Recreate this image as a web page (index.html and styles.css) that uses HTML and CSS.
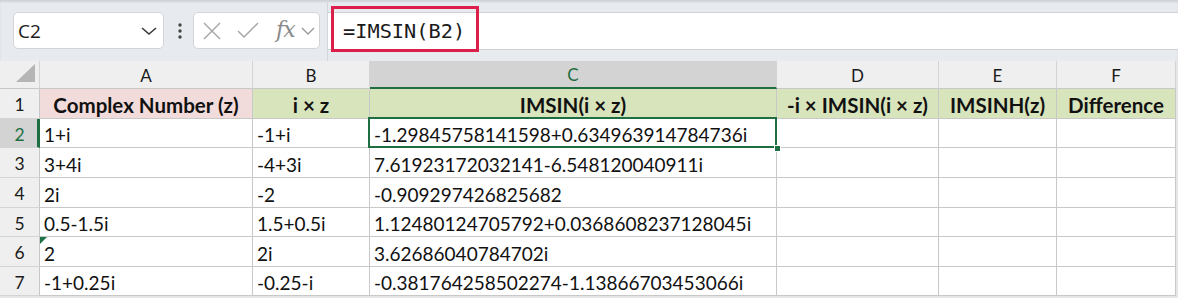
FILE: index.html
```html
<!DOCTYPE html>
<html>
<head>
<meta charset="utf-8">
<link rel="stylesheet" href="styles.css">
</head>
<body>
<div class="toolbar">
  <div class="namebox">
    <span class="name">C2</span>
    <svg class="chev" width="16" height="10" viewBox="0 0 16 10"><polyline points="1,2 8,8 15,2" fill="none" stroke="#3a3a3a" stroke-width="1.6"/></svg>
  </div>
  <svg class="dots" width="6" height="18" viewBox="0 0 6 18"><circle cx="3" cy="3" r="1.7" fill="#444"/><circle cx="3" cy="9" r="1.7" fill="#444"/><circle cx="3" cy="15" r="1.7" fill="#444"/></svg>
  <div class="fnbox">
    <svg class="ico-x" width="20" height="18" viewBox="0 0 20 18"><path d="M2 1 L18 17 M18 1 L2 17" stroke="#a8a8a8" stroke-width="1.5" fill="none"/></svg>
    <svg class="ico-ok" width="22" height="18" viewBox="0 0 22 18"><polyline points="1,9 7,15 21,1" fill="none" stroke="#a8a8a8" stroke-width="1.5"/></svg>
    <span class="fx">fx</span>
    <svg class="chev-s" width="14" height="8" viewBox="0 0 14 8"><polyline points="1,1 7,7 13,1" fill="none" stroke="#9a9a9a" stroke-width="1.4"/></svg>
  </div>
  <div class="formula">
    <div class="input">
      <span class="ftext">=IMSIN(B2)</span>
      <div class="highlight"></div>
    </div>
  </div>
</div>
<div class="sheet">
  <div class="corner"><span class="tri"></span></div>
  <div class="ch">A</div>
  <div class="ch">B</div>
  <div class="ch sel">C</div>
  <div class="ch">D</div>
  <div class="ch">E</div>
  <div class="ch">F</div>

  <div class="rh">1</div>
  <div class="c hd pink">Complex Number (z)</div>
  <div class="c hd green">i × z</div>
  <div class="c hd green">IMSIN(i × z)</div>
  <div class="c hd green">-i × IMSIN(i × z)</div>
  <div class="c hd green">IMSINH(z)</div>
  <div class="c hd green">Difference</div>

  <div class="rh sel">2</div>
  <div class="c">1+i</div>
  <div class="c">-1+i</div>
  <div class="c active">-1.29845758141598+0.634963914784736i<span class="handle"></span></div>
  <div class="c"></div>
  <div class="c"></div>
  <div class="c"></div>

  <div class="rh">3</div>
  <div class="c">3+4i</div>
  <div class="c">-4+3i</div>
  <div class="c">7.61923172032141-6.548120040911i</div>
  <div class="c"></div>
  <div class="c"></div>
  <div class="c"></div>

  <div class="rh">4</div>
  <div class="c">2i</div>
  <div class="c">-2</div>
  <div class="c">-0.909297426825682</div>
  <div class="c"></div>
  <div class="c"></div>
  <div class="c"></div>

  <div class="rh">5</div>
  <div class="c">0.5-1.5i</div>
  <div class="c">1.5+0.5i</div>
  <div class="c">1.12480124705792+0.0368608237128045i</div>
  <div class="c"></div>
  <div class="c"></div>
  <div class="c"></div>

  <div class="rh">6</div>
  <div class="c err">2</div>
  <div class="c">2i</div>
  <div class="c">3.62686040784702i</div>
  <div class="c"></div>
  <div class="c"></div>
  <div class="c"></div>

  <div class="rh">7</div>
  <div class="c">-1+0.25i</div>
  <div class="c">-0.25-i</div>
  <div class="c">-0.381764258502274-1.13866703453066i</div>
  <div class="c"></div>
  <div class="c"></div>
  <div class="c"></div>
</div>
</body>
</html>
```

FILE: styles.css
```css
* { box-sizing: border-box; }
html, body { margin: 0; padding: 0; background: #fff; }
body { width: 1178px; height: 298px; overflow: hidden; font-family: Lato, "Liberation Sans", sans-serif; }

.toolbar {
  height: 61px;
  background: #e7eaee;
  box-shadow: inset 0 2px 2px rgba(0,0,0,0.10);
  display: flex;
  align-items: flex-start;
  padding-top: 12px;
}
.namebox {
  margin-left: 13px;
  width: 151px;
  height: 37px;
  background: #fff;
  border: 1px solid #d2d4d6;
  border-radius: 5px;
  display: flex;
  align-items: center;
  justify-content: space-between;
  padding: 0 6px 0 4px;
}
.name { font-family: "Open Sans", "Noto Sans", sans-serif; font-size: 19px; color: #1a1a1a; margin-top: 1px; }
.chev { margin-top: 1px; }
.dots { margin: 10px 0 0 13px; }
.fnbox {
  margin-left: 10px;
  width: 127px;
  height: 37px;
  background: #fff;
  border: 1px solid #d2d4d6;
  border-radius: 5px;
  display: flex;
  align-items: center;
  padding-left: 8px;
}
.ico-x { margin-right: 15px; }
.ico-ok { margin-right: 17px; }
.fx {
  font-family: "DejaVu Serif", "Liberation Serif", serif;
  font-style: italic;
  font-size: 22px;
  color: #8a8a8a;
  letter-spacing: -1px;
  margin-right: 6px;
  margin-top: -3px;
}
.formula {
  flex: 1;
  align-self: stretch;
  margin-top: -12px;
  margin-left: 7px;
  border-left: 1px solid #d3d7db;
  display: flex;
  align-items: flex-start;
  padding-top: 12px;
}
.input {
  position: relative;
  flex: 1;
  height: 38px;
  background: #fff;
  border-top: 1px solid #cfd1d3;
  border-bottom: 1px solid #cfd1d3;
  padding-left: 15px;
  display: flex;
  align-items: center;
}
.ftext { font-family: "DejaVu Sans Mono", "Liberation Mono", monospace; font-size: 20.3px; color: #1a1a1a; }
.highlight {
  position: absolute;
  left: 3px;
  top: -7px;
  width: 148px;
  height: 46px;
  border: 3px solid #dc1e4a;
}

.sheet {
  display: grid;
  grid-template-columns: 40px 213px 117px 407px 162px 118px 119px;
  grid-template-rows: 28px 30px 29px 30px 30px 29px 30px 29px;
  background: #e6e6e6;
  height: 237px;
}
.corner {
  background: #efefef;
  border-right: 1px solid #d4d4d4;
  border-bottom: 1px solid #c8c8c8;
  position: relative;
}
.tri {
  position: absolute;
  right: 4px;
  bottom: 6px;
  width: 0; height: 0;
  border-left: 19px solid transparent;
  border-bottom: 18px solid #b5b5b5;
}
.ch {
  background: #efefef;
  border-right: 1px solid #d4d4d4;
  border-bottom: 1px solid #c8c8c8;
  font-size: 17px;
  color: #1a1a1a;
  display: flex;
  align-items: center;
  justify-content: center;
  padding-top: 1px;
}
.ch.sel { background: #d3d3d3; color: #1e6e42; border-bottom: 2px solid #1e6e42; }
.rh {
  background: #efefef;
  border-right: 1px solid #c8c8c8;
  border-bottom: 1px solid #d4d4d4;
  font-size: 17.5px;
  color: #1a1a1a;
  display: flex;
  align-items: center;
  justify-content: center;
  padding-top: 2px;
}
.rh.sel { background: #d3d3d3; color: #1e6e42; border-right: 3px solid #1e6e42; padding-left: 2px; }
.c {
  background: #fff;
  border-right: 1px solid #c8c8c8;
  border-bottom: 1px solid #c8c8c8;
  font-size: 19px;
  line-height: 22px;
  color: #111;
  display: flex;
  align-items: flex-end;
  padding: 0 0 1px 4px;
  white-space: nowrap;
  position: relative;
}
.c.hd { font-weight: 700; font-size: 20.5px; justify-content: center; padding-left: 0; padding-bottom: 2px; }
.c.pink { background: #f2dcdb; }
.c.green { background: #d8e4bc; }
.c.active::after {
  content: "";
  position: absolute;
  left: -2px; top: -2px; right: -1px; bottom: -1px;
  border: 2px solid #1e6e42;
}
.handle {
  position: absolute;
  right: -5px;
  bottom: -5px;
  width: 7px;
  height: 7px;
  background: #1e6e42;
  border: 1px solid #fff;
  z-index: 2;
}
.c.err::before {
  content: "";
  position: absolute;
  left: 0; top: 0;
  width: 0; height: 0;
  border-top: 7px solid #1e7145;
  border-right: 7px solid transparent;
}
```
